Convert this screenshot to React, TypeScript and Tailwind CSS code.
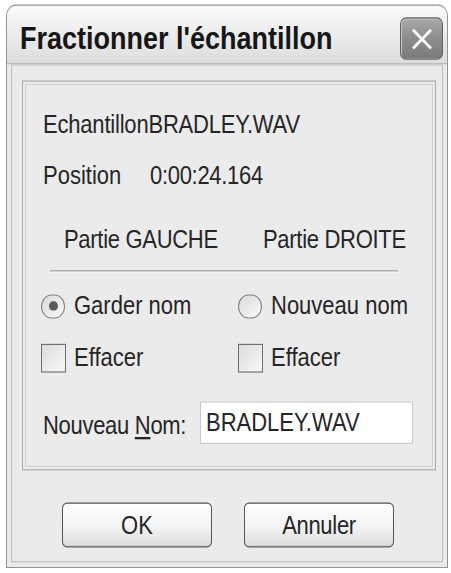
import React from "react";

function Radio({ checked }: { checked?: boolean }) {
  return (
    <div className="w-[24px] h-[21px] rounded-full border-[1.5px] border-[#7d7d7d] bg-gradient-to-br from-[#d8d8d8] to-[#fbfbfb] flex items-center justify-center shrink-0">
      {checked ? <div className="w-[9px] h-[8px] rounded-full bg-[#5a5a5a]" /> : null}
    </div>
  );
}

function Check() {
  return (
    <div className="w-[25px] h-[25px] border-[1.5px] border-[#6e6e6e] bg-gradient-to-br from-[#dcdcdc] to-[#f8f8f8] shrink-0" />
  );
}

export default function App() {
  return (
    <div className="w-[451px] h-[573px] bg-white overflow-hidden">
      <div className="w-[451px] h-[498px] origin-top-left scale-y-[1.15] pt-[4px] pl-[6px] font-['Liberation_Sans',Arial,sans-serif] text-[#262626]">
        <div className="w-[442px] h-[490px] flex flex-col rounded-t-[10px] border border-[#939393] bg-[#e9e9e9] overflow-hidden">
          {/* Title bar */}
          <div className="h-[51px] shrink-0 flex items-start justify-between pl-[13px] pr-[4px] pt-[10px] bg-gradient-to-b from-[#fafafa] via-[#ececec] to-[#dcdcdc] border-b border-[#b0b0b0]">
            <span className="mt-[3px] text-[27px] leading-[32px] font-bold text-[#161616]">
              Fractionner l'échantillon
            </span>
            <div className="w-[43px] h-[37px] rounded-[6px] border border-[#626262] bg-gradient-to-b from-[#a8a8a8] via-[#8d8d8d] to-[#7a7a7a] flex items-center justify-center shadow-[inset_1px_1px_0_#c4c4c4]">
              <svg width="22" height="20" viewBox="0 0 22 20">
                <path d="M2 2 L20 18 M20 2 L2 18" stroke="#ffffff" strokeWidth="2.6" fill="none" />
              </svg>
            </div>
          </div>
          {/* Body */}
          <div className="flex-1 px-[4px] pb-[4px] bg-[#eaeaea]">
            <div className="h-full border border-[#bdbdbd] bg-[#ebebeb] pt-[13px] pl-[10px]">
              {/* Group box */}
              <div className="w-[414px] h-[339px] border border-[#a9a9a9] shadow-[inset_0_0_0_2px_#ececec,inset_0_0_0_3px_#cfcfcf] pt-[25px] pl-[18px] text-[22px] leading-[26px]">
                <div className="pl-[2px] tracking-[-0.2px]">EchantillonBRADLEY.WAV</div>
                <div className="pl-[2px] mt-[18px] flex">
                  <span className="w-[107px]">Position</span>
                  <span className="tracking-[-0.3px]">0:00:24.164</span>
                </div>
                <div className="mt-[30px] grid grid-cols-[197px_1fr]">
                  <span className="pl-[23px] tracking-[-0.3px]">Partie GAUCHE</span>
                  <span className="pl-[25px] tracking-[-0.3px]">Partie DROITE</span>
                </div>
                <div className="mt-[13px] ml-[9px] w-[348px] h-[1px] bg-[#9c9c9c] shadow-[0_1px_0_#f8f8f8]" />
                <div className="mt-[17px] grid grid-cols-[197px_1fr] h-[26px]">
                  <div className="flex items-center gap-[9px]">
                    <Radio checked />
                    <span>Garder nom</span>
                  </div>
                  <div className="flex items-center gap-[9px]">
                    <Radio />
                    <span>Nouveau nom</span>
                  </div>
                </div>
                <div className="mt-[19px] grid grid-cols-[197px_1fr] h-[26px]">
                  <div className="flex items-center gap-[8px]">
                    <Check />
                    <span>Effacer</span>
                  </div>
                  <div className="flex items-center gap-[8px]">
                    <Check />
                    <span>Effacer</span>
                  </div>
                </div>
                <div className="mt-[25px] flex items-start">
                  <span className="w-[159px] pl-[2px] mt-[8px] tracking-[-0.3px]">
                    Nouveau <span className="underline underline-offset-[3px]">N</span>om:
                  </span>
                  <div className="w-[213px] h-[37px] border border-[#c9c9c9] bg-white pl-[5px] flex items-center">
                    <span>BRADLEY.WAV</span>
                  </div>
                </div>
              </div>
              {/* Buttons */}
              <div className="mt-[28px] pl-[40px] flex gap-[32px]">
                <div className="w-[150px] h-[39px] rounded-[5px] border border-[#555555] bg-gradient-to-b from-[#ffffff] via-[#f4f4f4] to-[#dedede] shadow-[inset_0_-1px_0_#cfcfcf] flex items-center justify-center text-[22px]">
                  OK
                </div>
                <div className="w-[150px] h-[39px] rounded-[5px] border border-[#555555] bg-gradient-to-b from-[#ffffff] via-[#f4f4f4] to-[#dedede] shadow-[inset_0_-1px_0_#cfcfcf] flex items-center justify-center text-[22px] tracking-[-0.3px]">
                  Annuler
                </div>
              </div>
            </div>
          </div>
        </div>
      </div>
    </div>
  );
}
